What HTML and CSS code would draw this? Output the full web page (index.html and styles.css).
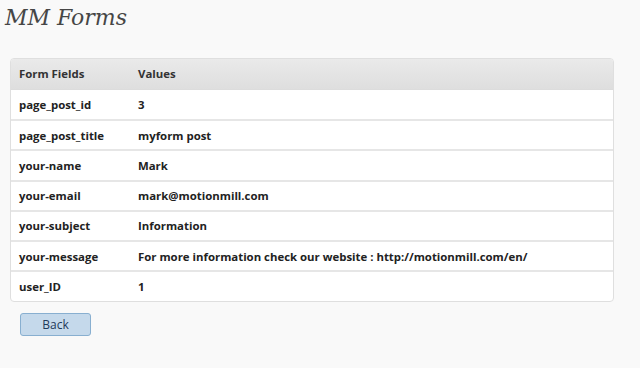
FILE: index.html
```html
<!DOCTYPE html>
<html lang="en">
<head>
  <meta charset="UTF-8" />
  <title>MM Forms</title>
  <link rel="stylesheet" href="styles.css">
</head>
<body>
  <div class="wrap">
    <h2>MM Forms</h2>
    <table class="form-table">
      <thead>
        <tr>
          <th class="col-field">Form Fields</th>
          <th>Values</th>
        </tr>
      </thead>
      <tbody>
        <tr><td>page_post_id</td><td>3</td></tr>
        <tr><td>page_post_title</td><td>myform post</td></tr>
        <tr><td>your-name</td><td>Mark</td></tr>
        <tr><td>your-email</td><td>mark@motionmill.com</td></tr>
        <tr><td>your-subject</td><td>Information</td></tr>
        <tr><td>your-message</td><td>For more information check our website : http://motionmill.com/en/</td></tr>
        <tr><td>user_ID</td><td>1</td></tr>
      </tbody>
    </table>
    <div class="actions">
      <button type="button" class="btn-back">Back</button>
    </div>
  </div>
</body>
</html>
```
FILE: styles.css
```css
/* --- Base --- */
* {
  margin: 0;
  padding: 0;
  box-sizing: border-box;
}
html,
body {
  height: 100%;
  background: #f9f9f9;
  font-family: "Open Sans", sans-serif;
  color: #333;
}

.wrap {
  padding: 0 26px 0 10px;
}

/* --- Page title --- */
.wrap h2 {
  font-family: "DejaVu Serif", serif;
  font-style: italic;
  font-weight: normal;
  font-size: 22px;
  color: #464646;
  margin-left: -5px;
  padding-top: 5px;
  height: 58px;
}

/* --- Table --- */
.form-table {
  width: 100%;
  border-collapse: separate;
  border-spacing: 0;
  background: #fff;
  border: 1px solid #dfdfdf;
  border-radius: 4px;
  font-size: 11.4px;
  font-weight: bold;
}
.form-table th {
  text-align: left;
  height: 31px;
  padding: 0 8px 1px;
  background: linear-gradient(to bottom, #eaeaea 0%, #dedede 100%);
  border-bottom: 1px solid #dcdcdc;
  color: #333;
}
.form-table th:first-child {
  border-top-left-radius: 3px;
}
.form-table th:last-child {
  border-top-right-radius: 3px;
}
.form-table .col-field {
  width: 119px;
}
.form-table td {
  height: 30.2px;
  padding: 0 8px;
  border-top: 1px solid #e6e6e6;
  border-bottom: 1px solid #e6e6e6;
  vertical-align: middle;
  color: #222;
}
.form-table tbody tr:first-child td {
  border-top: none;
}
.form-table tbody tr:last-child td {
  border-bottom: none;
}

/* --- Back button --- */
.actions {
  padding: 10px 0 0 10px;
}
.btn-back {
  width: 71px;
  height: 23px;
  font-family: "Open Sans", sans-serif;
  font-size: 12px;
  color: #1f3a5a;
  background: #c5d9eb;
  border: 1px solid #88afd0;
  border-radius: 3px;
  cursor: pointer;
}
```
